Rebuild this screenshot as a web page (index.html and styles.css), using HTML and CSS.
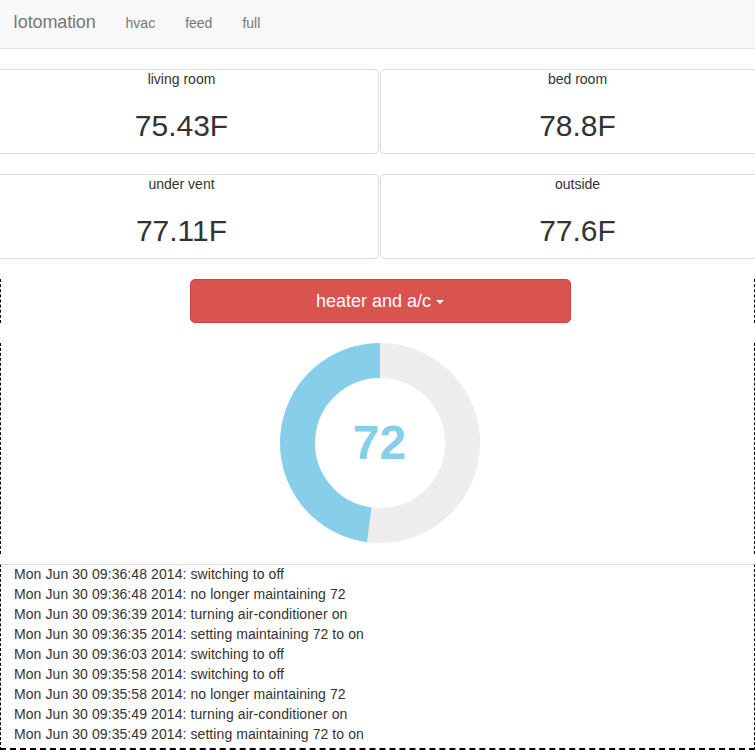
FILE: index.html
```html
<!DOCTYPE html>
<html>
<head>
<meta charset="utf-8">
<title>Iotomation</title>
<link rel="stylesheet" href="styles.css">
</head>
<body>
<nav class="navbar">
  <a class="brand" href="#">Iotomation</a>
  <a class="nav-link" href="#">hvac</a>
  <a class="nav-link" href="#">feed</a>
  <a class="nav-link" href="#">full</a>
</nav>

<section class="cards">
  <div class="card"><div class="card-label">living room</div><h2 class="card-value">75.43F</h2></div>
  <div class="card"><div class="card-label">bed room</div><h2 class="card-value">78.8F</h2></div>
  <div class="card"><div class="card-label">under vent</div><h2 class="card-value">77.11F</h2></div>
  <div class="card"><div class="card-label">outside</div><h2 class="card-value">77.6F</h2></div>
</section>

<section class="controls">
  <button class="btn-danger">heater and a/c <span class="caret"></span></button>
</section>

<section class="chart">
  <div class="donut">
    <svg class="donut-svg" width="200" height="200" viewBox="0 0 200 200">
      <circle cx="100" cy="100" r="82.5" fill="none" stroke="#eeeeee" stroke-width="35"/>
      <path d="M100 17.5 A82.5 82.5 0 0 0 89.23 181.79" fill="none" stroke="#87ceeb" stroke-width="35"/>
    </svg>
    <span class="donut-value">72</span>
  </div>
</section>

<section class="log">
  <div class="log-line">Mon Jun 30 09:36:48 2014: switching to off</div>
  <div class="log-line">Mon Jun 30 09:36:48 2014: no longer maintaining 72</div>
  <div class="log-line">Mon Jun 30 09:36:39 2014: turning air-conditioner on</div>
  <div class="log-line">Mon Jun 30 09:36:35 2014: setting maintaining 72 to on</div>
  <div class="log-line">Mon Jun 30 09:36:03 2014: switching to off</div>
  <div class="log-line">Mon Jun 30 09:35:58 2014: switching to off</div>
  <div class="log-line">Mon Jun 30 09:35:58 2014: no longer maintaining 72</div>
  <div class="log-line">Mon Jun 30 09:35:49 2014: turning air-conditioner on</div>
  <div class="log-line">Mon Jun 30 09:35:49 2014: setting maintaining 72 to on</div>
</section>
</body>
</html>
```

FILE: styles.css
```css
html, body {
  margin: 0;
  padding: 0;
  overflow: hidden;
}
body {
  font-family: "Liberation Sans", Arial, Helvetica, sans-serif;
  font-size: 14px;
  line-height: 20px;
  color: #333333;
  background: #ffffff;
  width: 755px;
}

.navbar {
  display: flex;
  align-items: flex-start;
  height: 48px;
  background: #f8f8f8;
  border-bottom: 1px solid #e7e7e7;
}
.brand {
  padding: 12px 15px 0 13px;
  font-size: 18px;
  line-height: 20px;
  letter-spacing: -0.15px;
  color: #777777;
  text-decoration: none;
}
.nav-link {
  padding: 13px 15px 0;
  font-size: 14px;
  line-height: 20px;
  color: #777777;
  text-decoration: none;
}

.cards {
  display: grid;
  grid-template-columns: 1fr 1fr;
  column-gap: 1px;
  row-gap: 20px;
  margin: 20px -20px 20px -16px;
}
.card {
  border: 1px solid #dddddd;
  border-radius: 4px;
  text-align: center;
}
.card-label {
  font-size: 14px;
  line-height: 18px;
}
.card-value {
  margin: 21px 0 11px;
  font-size: 30px;
  line-height: 33px;
  font-weight: 500;
}

.controls {
  border-left: 1px dashed #000000;
  border-right: 1px dashed #000000;
  padding-left: 5px;
  display: flex;
  justify-content: center;
}
.btn-danger {
  width: 381px;
  height: 44px;
  padding: 10px 16px;
  font-family: "Liberation Sans", Arial, Helvetica, sans-serif;
  font-size: 18px;
  line-height: 22px;
  color: #ffffff;
  background: #d9534f;
  border: 1px solid #d43f3a;
  border-radius: 5px;
  cursor: pointer;
}
.caret {
  display: inline-block;
  width: 0;
  height: 0;
  margin-left: 0;
  vertical-align: middle;
  border-top: 4px solid #ffffff;
  border-left: 4px solid transparent;
  border-right: 4px solid transparent;
}

.chart {
  margin-top: 20px;
  height: 211px;
  border-left: 1px dashed #000000;
  border-right: 1px dashed #000000;
  padding-left: 4px;
  display: flex;
  justify-content: center;
  align-items: flex-start;
}
.donut {
  display: grid;
  width: 200px;
  height: 200px;
}
.donut-svg {
  grid-area: 1 / 1;
  display: block;
}
.donut-value {
  grid-area: 1 / 1;
  align-self: center;
  justify-self: center;
  font-size: 48px;
  line-height: 48px;
  font-weight: bold;
  color: #87ceeb;
}

.log {
  margin-top: 10px;
  border-top: 1px solid #dddddd;
  border-left: 1px dashed #000000;
  border-right: 1px dashed #000000;
  border-bottom: 2px dashed #000000;
  padding: 0 0 4px 13px;
}
.log-line {
  font-size: 14px;
  line-height: 20px;
  letter-spacing: 0.08px;
  white-space: nowrap;
}
.log-line:first-child {
  margin-top: -1px;
}
```
